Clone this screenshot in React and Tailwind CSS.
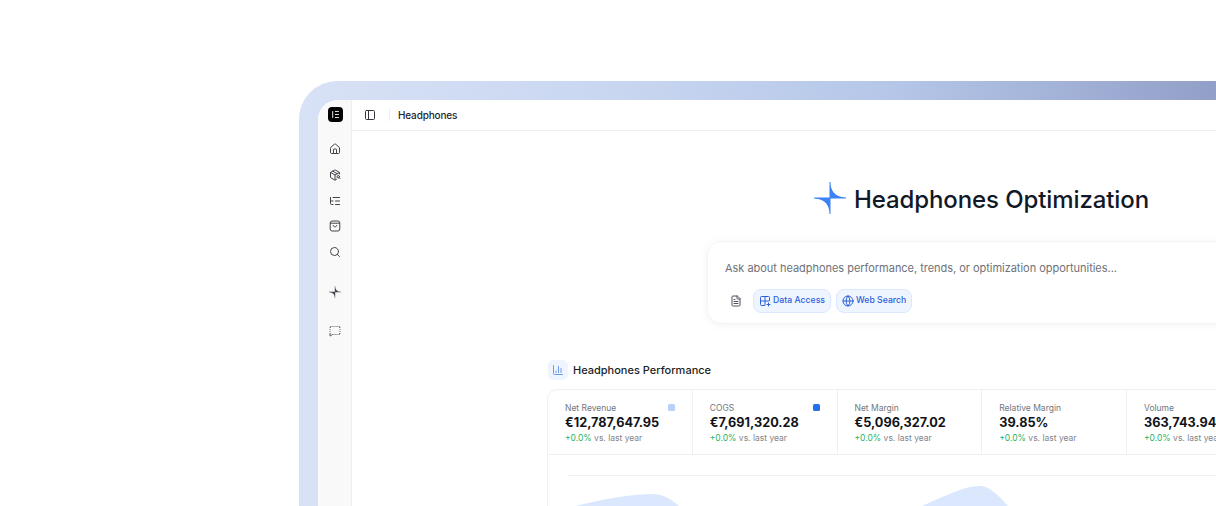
import React from 'react';
import {
  ChartColumn,
  FileText,
  Globe,
  Grid2x2Plus,
  House,
  ListTree,
  MessageSquareDashed,
  PackageSearch,
  PanelLeft,
  Search,
} from 'lucide-react';

const metrics = [
  { label: 'Net Revenue', value: '€12,787,647.95', dot: 'bg-[#b9d0fb]' },
  { label: 'COGS', value: '€7,691,320.28', dot: 'bg-[#2570ef]' },
  { label: 'Net Margin', value: '€5,096,327.02' },
  { label: 'Relative Margin', value: '39.85%' },
  { label: 'Volume', value: '363,743.94' },
];

const Bag = () => (
  <svg width="12" height="12" viewBox="0 0 12 12" fill="none" stroke="#404349" strokeWidth="1">
    <rect x="1.2" y="1" width="9.6" height="10" rx="2" />
    <path d="M1.2 3.2h9.6M4 5c.3 1.2 1 1.8 2 1.8S7.700 6.200 8 5" />
  </svg>
);

const Sparkle = ({ size, color, className }) => (
  <svg width={size} height={size} viewBox="0 0 32 32" fill={color} className={className}>
    <path d="M15.500 0H16.500C16.500 8 20 15 32 15.500V16.500H16.500V32H15.500C15.500 24 12 17 0 16.500V15.500H15.500Z" />
  </svg>
);

const Sidebar = () => (
  <aside className="flex w-[34px] shrink-0 flex-col items-center border-r border-[#eceef1] bg-[#f9f9fa] pt-[7px] text-[#404349]">
    <div className="ml-[1px] flex h-[15px] w-[15px] items-center justify-center rounded-[4px] bg-black">
      <svg width="9" height="9" viewBox="0 0 8 8" fill="none" stroke="white" strokeWidth="0.8">
        <path d="M1.500 1v6M3.500 1.300H7M3.500 4H7M3.500 6.700H7" />
      </svg>
    </div>
    <div className="mt-[21px] flex flex-col items-center gap-[13.750px]">
      <House size={12} />
      <PackageSearch size={12} />
      <ListTree size={12} />
      <Bag />
      <Search size={12} />
    </div>
    <div className="mt-[28px]">
      <Sparkle size={12} color="#404349" />
    </div>
    <MessageSquareDashed size={12} className="mt-[27px]" />
  </aside>
);

const Chip = ({ icon, label }) => (
  <div className="flex h-[24px] items-center gap-[2px] rounded-[8px] border border-[#dbe8fd] bg-[#eff5ff] px-[5px] text-[8.700px] font-medium text-[#2b5fd9]">
    {icon}
    <span>{label}</span>
  </div>
);

const Metric = ({ label, value, dot }) => (
  <div className="relative w-[144.750px] shrink-0 border-r border-[#eff0f2] pl-[17px] pt-[11px]">
    <div className="text-[8.500px] leading-[14px] text-[#73767c]">{label}</div>
    <div className="text-[12.700px] font-bold leading-[16px] text-[#111318]">{value}</div>
    <div className="mt-[1px] text-[8.500px] leading-[12px] text-[#81848a]">
      <span className="text-[#29b35e]">+0.0%</span> vs. last year
    </div>
    {dot ? <span className={`absolute right-[17px] top-[14px] h-[7px] w-[7px] rounded-[1.500px] ${dot}`} /> : null}
  </div>
);

export default function App() {
  return (
    <div className="h-[506px] w-[1216px] overflow-hidden bg-white font-['Inter',sans-serif]">
      <div className="ml-[299px] mt-[81px] h-[425px] w-[917px] rounded-tl-[38px] bg-[linear-gradient(90deg,#d8e2f6_0%,#c8d6f0_35%,#b5c6e8_65%,#929fc8_100%)] pl-[19px] pt-[19px]">
        <div className="flex h-full overflow-hidden rounded-tl-[20px] bg-white">
          <Sidebar />
          <main className="min-w-0 flex-1">
            <header className="flex h-[31px] items-center border-b border-[#eceef1] pl-[12px]">
              <PanelLeft size={12} className="text-[#33363c]" />
              <div className="ml-[13px] h-[12px] w-px bg-[#eceef1]" />
              <span className="ml-[8px] text-[10px] font-medium tracking-[-0.15px] text-[#24272d]">Headphones</span>
            </header>

            <div className="ml-[462px] mt-[50px] flex h-[37px] items-center gap-[8px]">
              <Sparkle size={32} color="#3b82f6" className="-mt-[3px]" />
              <h1 className="whitespace-nowrap text-[24px] font-medium leading-[37px] tracking-[-0.1px] text-[#111827]">
                Headphones Optimization
              </h1>
            </div>

            <div className="ml-[355px] mt-[23px] h-[83px] w-[600px] rounded-[14px] border border-[#f4f5f6] bg-white pl-[17px] pt-[18px] shadow-[0_1px_8px_rgba(15,23,42,0.05)]">
              <div className="whitespace-nowrap text-[11px] leading-[16px] tracking-[-0.03px] text-[#6e7278]">
                Ask about headphones performance, trends, or optimization opportunities...
              </div>
              <div className="ml-[5px] mt-[13px] flex items-center">
                <FileText size={12} className="text-[#50535a]" />
                <div className="ml-[11px] flex gap-[5px]">
                  <Chip icon={<Grid2x2Plus size={12} />} label="Data Access" />
                  <Chip icon={<Globe size={12} />} label="Web Search" />
                </div>
              </div>
            </div>

            <div className="ml-[196px] mt-[36px] flex h-[20px] items-center gap-[5px]">
              <div className="flex h-[20px] w-[20px] items-center justify-center rounded-[5px] bg-[#eff5ff]">
                <ChartColumn size={12} className="text-[#6c98ea]" />
              </div>
              <span className="text-[11px] font-medium text-[#1b1e24]">Headphones Performance</span>
            </div>

            <section className="ml-[195px] mt-[9px] h-[200px] w-[800px] rounded-tl-[10px] border-l border-t border-[#eff0f2]">
              <div className="flex h-[65px] border-b border-[#eff0f2]">
                {metrics.map((m) => (
                  <Metric key={m.label} {...m} />
                ))}
              </div>
              <div className="relative h-[51px]">
                <svg width="670" height="31" viewBox="0 0 670 31" className="absolute left-[20px] top-[20px]">
                  <path d="M0 .5H670" stroke="#f0f1f3" strokeWidth="1" fill="none" />
                  <path d="M7 31C40 23 65 19 85 19C95 19 103 24 111 31Z" fill="#dbe7fd" />
                  <path d="M354 31C375 22 395 11 412 11C422 11 432 22 440 31Z" fill="#dbe7fd" />
                </svg>
              </div>
            </section>
          </main>
        </div>
      </div>
    </div>
  );
}
